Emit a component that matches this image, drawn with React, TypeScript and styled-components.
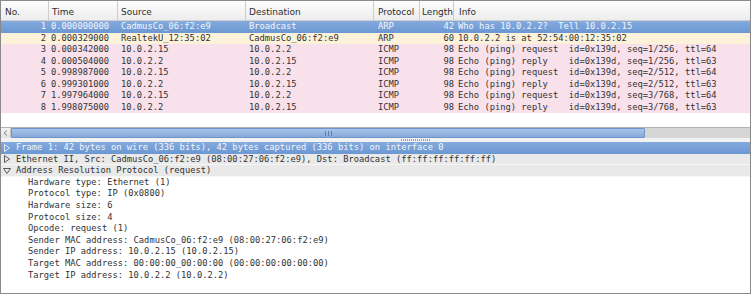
import React from 'react'
import styled, { createGlobalStyle, css } from 'styled-components'

const GlobalStyle = createGlobalStyle`
  html, body {
    margin: 0;
    padding: 0;
    background: #ffffff;
  }
`

const MONO = `"DejaVu Sans Mono", "Liberation Mono", monospace`
const SANS = `"DejaVu Sans", "Liberation Sans", sans-serif`
const COLS = '48px 69px 128px 128px 46px 34px 1fr'

const Window = styled.div`
  box-sizing: border-box;
  width: 751px;
  height: 294px;
  border: 1px solid #8a8a8a;
  display: flex;
  flex-direction: column;
  overflow: hidden;
  background: #ffffff;
`

const PacketList = styled.div`
  height: 126px;
  flex: none;
  display: flex;
  flex-direction: column;
`

const HeaderRow = styled.div`
  display: grid;
  grid-template-columns: ${COLS};
  height: 20px;
  flex: none;
  box-sizing: border-box;
  background: linear-gradient(#fdfdfd, #ededed);
  border-bottom: 1px solid #cfcfcf;
  font-family: ${SANS};
  font-size: 9px;
  color: #2e2e2e;
`

const HeaderCell = styled.div<{ $last?: boolean; $pad?: number }>`
  display: flex;
  align-items: center;
  padding: 2px 0 0 ${({ $pad }) => $pad ?? 3}px;
  border-right: ${({ $last }) => ($last ? 'none' : '1px solid #cdcdcd')};
  white-space: nowrap;
  overflow: hidden;
`

type RowKind = 'selected' | 'arp' | 'icmp'

const rowColors: Record<RowKind, ReturnType<typeof css>> = {
  selected: css`
    background: linear-gradient(#84aadd, #6b97d2);
    color: #f3f6fb;
  `,
  arp: css`
    background: #fbf2d9;
    color: #333333;
  `,
  icmp: css`
    background: #f9e1eb;
    color: #333333;
  `,
}

const PacketRow = styled.div<{ $kind: RowKind }>`
  display: grid;
  grid-template-columns: ${COLS};
  height: 11.5px;
  line-height: 11.5px;
  font-family: ${MONO};
  font-size: 8.78px;
  white-space: pre;
  ${({ $kind }) => rowColors[$kind]}
`

const Cell = styled.div<{ $right?: boolean; $pl?: number; $pr?: number }>`
  text-align: ${({ $right }) => ($right ? 'right' : 'left')};
  padding-left: ${({ $pl }) => $pl ?? 3}px;
  padding-right: ${({ $pr }) => $pr ?? 0}px;
  overflow: hidden;
`

const HScroll = styled.div`
  height: 11px;
  flex: none;
  box-sizing: border-box;
  border-top: 1px solid #b4b4b4;
  display: flex;
  background: #d6d6d6;
`

const ScrollButton = styled.div`
  width: 10px;
  display: flex;
  align-items: center;
  justify-content: center;
  background: linear-gradient(#f4f4f4, #e2e2e2);
  border-right: 1px solid #c4c4c4;
  box-sizing: border-box;
`

const ScrollThumb = styled.div`
  width: 634px;
  box-sizing: border-box;
  background: linear-gradient(#a8c4e9, #86a9da);
  border: 1px solid #6f95c8;
  border-radius: 1px;
  display: flex;
  align-items: center;
  justify-content: center;
`

const Grip = styled.div`
  display: flex;
  gap: 2px;
  span {
    width: 1px;
    height: 5px;
    background: #5a7fb3;
  }
`

const Splitter = styled.div`
  height: 4px;
  flex: none;
  background: #f2f2f2;
  display: flex;
  align-items: center;
  padding-left: 400px;
`

const Dots = styled.div`
  width: 30px;
  height: 2px;
  background-image: repeating-linear-gradient(90deg, #a0a0a0 0 1px, transparent 1px 2px);
`

const Details = styled.div`
  flex: 1;
  font-family: ${MONO};
  font-size: 8.78px;
  white-space: pre;
`

type TreeKind = 'selected' | 'top' | 'leaf'

const TreeRow = styled.div<{ $kind: TreeKind }>`
  display: flex;
  align-items: center;
  height: 11.6px;
  line-height: 11.6px;
  padding-left: ${({ $kind }) => ($kind === 'leaf' ? 27 : 2)}px;
  color: ${({ $kind }) => ($kind === 'selected' ? '#f3f6fb' : '#333333')};
  ${({ $kind }) =>
    $kind === 'selected'
      ? css`
          background: linear-gradient(#84aadd, #6b97d2);
        `
      : $kind === 'top'
        ? css`
            background: #e9e9e9;
            box-shadow: inset 0 -1px 0 #f6f6f6;
          `
        : css`
            background: #ffffff;
          `}
`

const Expander = styled.span`
  width: 13px;
  display: inline-flex;
  align-items: center;
  flex: none;
`

const Arrow: React.FC<{ open?: boolean; color: string }> = ({ open, color }) => (
  <svg width="8" height="8" viewBox="0 0 8 8">
    {open ? (
      <path d="M0.5 1.5 H7.5 L4 6.5 Z" fill="none" stroke={color} strokeWidth="0.9" />
    ) : (
      <path d="M1.5 0.5 V7.5 L6.5 4 Z" fill="none" stroke={color} strokeWidth="0.9" />
    )}
  </svg>
)

const packets: { no: number; time: string; src: string; dst: string; proto: string; len: number; info: string; kind: RowKind }[] = [
  { no: 1, time: '0.000000000', src: 'CadmusCo_06:f2:e9', dst: 'Broadcast', proto: 'ARP', len: 42, info: 'Who has 10.0.2.2?  Tell 10.0.2.15', kind: 'selected' },
  { no: 2, time: '0.000329000', src: 'RealtekU_12:35:02', dst: 'CadmusCo_06:f2:e9', proto: 'ARP', len: 60, info: '10.0.2.2 is at 52:54:00:12:35:02', kind: 'arp' },
  { no: 3, time: '0.000342000', src: '10.0.2.15', dst: '10.0.2.2', proto: 'ICMP', len: 98, info: 'Echo (ping) request  id=0x139d, seq=1/256, ttl=64', kind: 'icmp' },
  { no: 4, time: '0.000504000', src: '10.0.2.2', dst: '10.0.2.15', proto: 'ICMP', len: 98, info: 'Echo (ping) reply    id=0x139d, seq=1/256, ttl=63', kind: 'icmp' },
  { no: 5, time: '0.998987000', src: '10.0.2.15', dst: '10.0.2.2', proto: 'ICMP', len: 98, info: 'Echo (ping) request  id=0x139d, seq=2/512, ttl=64', kind: 'icmp' },
  { no: 6, time: '0.999301000', src: '10.0.2.2', dst: '10.0.2.15', proto: 'ICMP', len: 98, info: 'Echo (ping) reply    id=0x139d, seq=2/512, ttl=63', kind: 'icmp' },
  { no: 7, time: '1.997964000', src: '10.0.2.15', dst: '10.0.2.2', proto: 'ICMP', len: 98, info: 'Echo (ping) request  id=0x139d, seq=3/768, ttl=64', kind: 'icmp' },
  { no: 8, time: '1.998075000', src: '10.0.2.2', dst: '10.0.2.15', proto: 'ICMP', len: 98, info: 'Echo (ping) reply    id=0x139d, seq=3/768, ttl=63', kind: 'icmp' },
]

const tree: { text: string; kind: TreeKind; open?: boolean }[] = [
  { text: 'Frame 1: 42 bytes on wire (336 bits), 42 bytes captured (336 bits) on interface 0', kind: 'selected' },
  { text: 'Ethernet II, Src: CadmusCo_06:f2:e9 (08:00:27:06:f2:e9), Dst: Broadcast (ff:ff:ff:ff:ff:ff)', kind: 'top' },
  { text: 'Address Resolution Protocol (request)', kind: 'top', open: true },
  { text: 'Hardware type: Ethernet (1)', kind: 'leaf' },
  { text: 'Protocol type: IP (0x0800)', kind: 'leaf' },
  { text: 'Hardware size: 6', kind: 'leaf' },
  { text: 'Protocol size: 4', kind: 'leaf' },
  { text: 'Opcode: request (1)', kind: 'leaf' },
  { text: 'Sender MAC address: CadmusCo_06:f2:e9 (08:00:27:06:f2:e9)', kind: 'leaf' },
  { text: 'Sender IP address: 10.0.2.15 (10.0.2.15)', kind: 'leaf' },
  { text: 'Target MAC address: 00:00:00_00:00:00 (00:00:00:00:00:00)', kind: 'leaf' },
  { text: 'Target IP address: 10.0.2.2 (10.0.2.2)', kind: 'leaf' },
]

export default function App() {
  return (
    <>
      <GlobalStyle />
      <Window>
        <PacketList>
          <HeaderRow>
            <HeaderCell $pad={4}>No.</HeaderCell>
            <HeaderCell>Time</HeaderCell>
            <HeaderCell>Source</HeaderCell>
            <HeaderCell>Destination</HeaderCell>
            <HeaderCell $pad={4}>Protocol</HeaderCell>
            <HeaderCell $pad={2}>Length</HeaderCell>
            <HeaderCell $pad={5} $last>
              Info
            </HeaderCell>
          </HeaderRow>
          {packets.map((p) => (
            <PacketRow key={p.no} $kind={p.kind}>
              <Cell $right $pr={3} $pl={0}>
                {p.no}
              </Cell>
              <Cell $pl={2}>{p.time}</Cell>
              <Cell>{p.src}</Cell>
              <Cell>{p.dst}</Cell>
              <Cell $pl={4}>{p.proto}</Cell>
              <Cell $right $pl={0}>
                {p.len}
              </Cell>
              <Cell $pl={4}>{p.info}</Cell>
            </PacketRow>
          ))}
        </PacketList>
        <HScroll>
          <ScrollButton>
            <svg width="5" height="6" viewBox="0 0 5 6">
              <path d="M4 0.5 L1 3 L4 5.5" fill="none" stroke="#8a8a8a" strokeWidth="1" />
            </svg>
          </ScrollButton>
          <ScrollThumb>
            <Grip>
              <span />
              <span />
              <span />
            </Grip>
          </ScrollThumb>
        </HScroll>
        <Splitter>
          <Dots />
        </Splitter>
        <Details>
          {tree.map((t) => (
            <TreeRow key={t.text} $kind={t.kind}>
              {t.kind !== 'leaf' && (
                <Expander>
                  <Arrow open={t.open} color={t.kind === 'selected' ? '#eef3fb' : '#4a4a4a'} />
                </Expander>
              )}
              {t.text}
            </TreeRow>
          ))}
        </Details>
      </Window>
    </>
  )
}
